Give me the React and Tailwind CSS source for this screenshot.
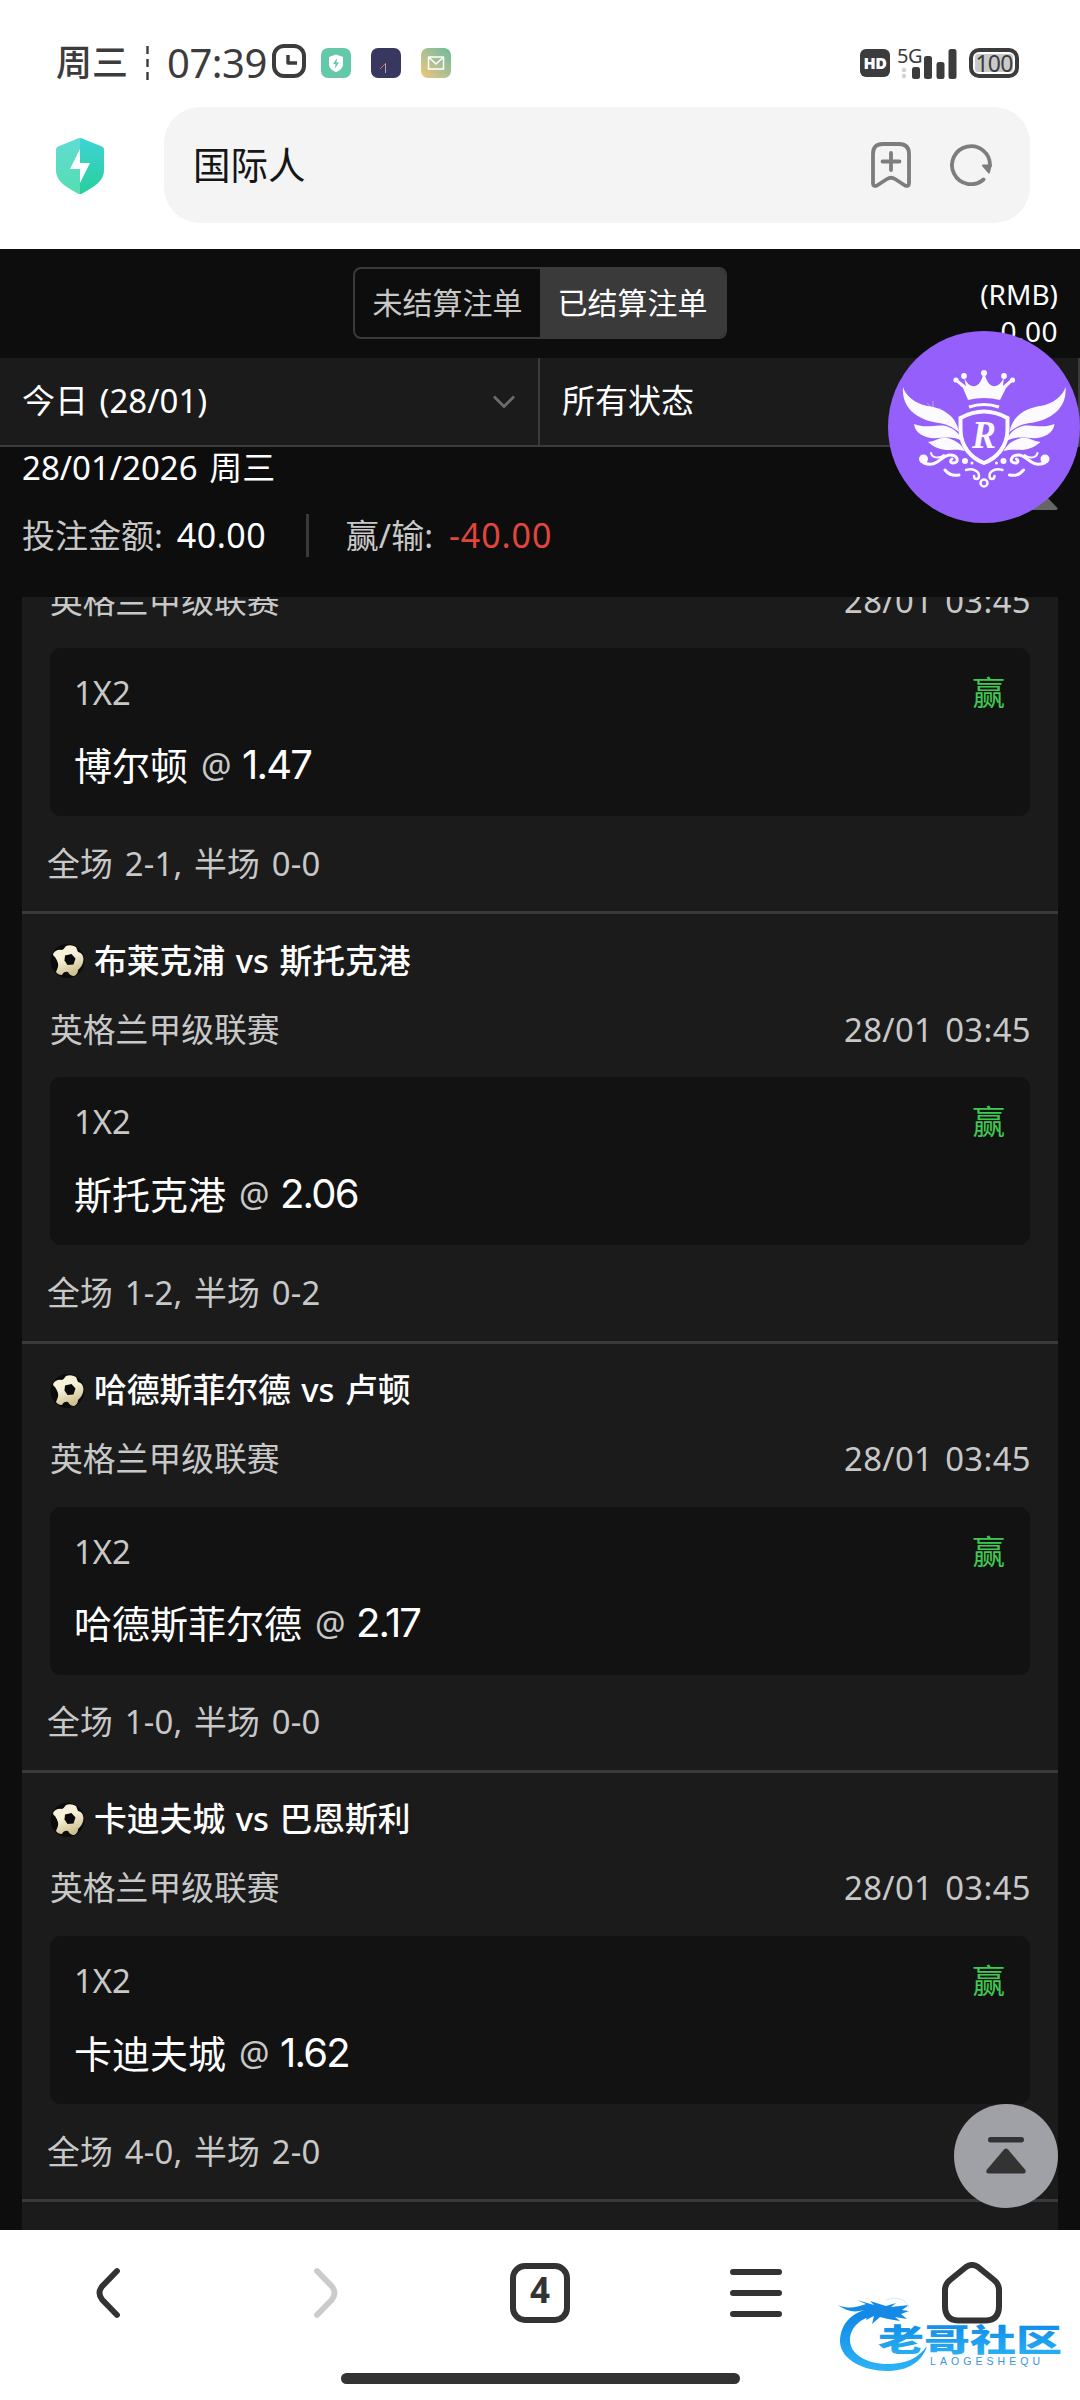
const bets = [
  { id: 1, league: '英格兰甲级联赛', time: '28/01 03:45', pick: '博尔顿', odds: '1.47', result: '全场 2-1, 半场 0-0' },
  { id: 2, match: '布莱克浦 vs 斯托克港', league: '英格兰甲级联赛', time: '28/01 03:45', pick: '斯托克港', odds: '2.06', result: '全场 1-2, 半场 0-2' },
  { id: 3, match: '哈德斯菲尔德 vs 卢顿', league: '英格兰甲级联赛', time: '28/01 03:45', pick: '哈德斯菲尔德', odds: '2.17', result: '全场 1-0, 半场 0-0' },
  { id: 4, match: '卡迪夫城 vs 巴恩斯利', league: '英格兰甲级联赛', time: '28/01 03:45', pick: '卡迪夫城', odds: '1.62', result: '全场 4-0, 半场 2-0' },
];

function StatusBar() {
  return (
    <div className="flex h-[107px] shrink-0 items-center justify-between pt-[19px] pl-[56px] pr-[61px] text-[#3c3c3c]">
      <div className="flex items-center">
        <span className="text-[36px] font-medium leading-none">周三</span>
        <svg className="ml-[18px]" width="3" height="34" viewBox="0 0 3 34" stroke="#3c3c3c" strokeWidth="2.4">
          <path d="M1.5 0v8M1.5 13v8M1.5 26v8" />
        </svg>
        <span className="ml-[18px] w-[105px] text-[40px] leading-none tracking-[-0.5px]">07:39</span>
        <svg className="-mt-1" width="34" height="34" viewBox="0 0 34 34" fill="none" stroke="#3c3c3c" strokeWidth="4">
          <rect x="2" y="2" width="30" height="30" rx="10" />
          <path d="M16 11v8h9" strokeWidth="3.4" strokeLinejoin="round" />
        </svg>
        <svg className="ml-[15px]" width="30" height="30" viewBox="0 0 30 30">
          <rect width="30" height="30" rx="7" fill="#63c9a9" />
          <path d="M15 6.5 22 9v7c0 4-3 6.500-7 8-4-1.500-7-4-7-8V9z" fill="#fff" />
          <path d="M16 10l-4 6h2.500l-.5 4.500 4-6h-2.600z" fill="#63c9a9" />
        </svg>
        <svg className="ml-[20px]" width="30" height="30" viewBox="0 0 30 30">
          <rect width="30" height="30" rx="7" fill="#38375f" />
          <path d="M9 21l6-6" stroke="#e0685a" strokeWidth="1" />
          <path d="M14.500 16v9" stroke="#a9a6bd" strokeWidth="1" />
        </svg>
        <svg className="ml-[20px]" width="30" height="30" viewBox="0 0 30 30" fill="none">
          <defs>
            <linearGradient id="mail" x1="0" y1="1" x2="1" y2="0">
              <stop offset="0" stopColor="#f2c678" />
              <stop offset=".6" stopColor="#9ebf97" />
              <stop offset="1" stopColor="#6cba9b" />
            </linearGradient>
          </defs>
          <rect width="30" height="30" rx="7" fill="url(#mail)" />
          <path d="M7.500 9h15v12h-15zM8 9.500l7 6.500 7-6.500" stroke="#fff" strokeWidth="1.500" strokeLinejoin="round" />
        </svg>
      </div>
      <div className="flex items-center">
        <span className="flex h-[28px] w-[30px] items-center justify-center rounded-[6px] bg-[#3c3c3c] text-[16px] font-black leading-none tracking-[-0.5px] text-white">HD</span>
        <div className="relative ml-[7px] h-[32px] w-[61px]">
          <span className="absolute -top-[1px] left-0 text-[20px] leading-none tracking-[-0.5px]">5G</span>
          <svg width="61" height="32" viewBox="0 0 61 32" fill="#3c3c3c">
            <circle cx="7" cy="23" r="2.200" fill="#d2d2d2" />
            <circle cx="7" cy="29" r="2.200" fill="#d2d2d2" />
            <rect x="15" y="20" width="8" height="12" rx="2.500" />
            <rect x="27" y="9" width="8" height="23" rx="2.500" />
            <rect x="39.500" y="15" width="8" height="17" rx="2.500" />
            <rect x="51.500" y="2" width="8" height="30" rx="2.500" />
          </svg>
        </div>
        <div className="ml-[11px] flex h-[30px] w-[50px] items-center justify-center rounded-[10px] border-4 border-[#3c3c3c] bg-white p-[2px]">
          <span className="flex h-full w-full items-center justify-center rounded-[3px] bg-[#c9c9c9] text-[23px] leading-none tracking-[-0.8px]">100</span>
        </div>
      </div>
    </div>
  );
}

function AddressBar() {
  return (
    <div className="flex h-[142px] shrink-0 items-start pl-[56px] pr-[50px]">
      <svg className="mt-[31px]" width="48" height="56" viewBox="0 0 48 56">
        <defs>
          <linearGradient id="shieldLeft" x1="0" y1="0" x2="0" y2="1">
            <stop offset="0" stopColor="#60dcd4" />
            <stop offset="1" stopColor="#55deb0" />
          </linearGradient>
          <linearGradient id="shieldRight" x1="0" y1="0" x2="0" y2="1">
            <stop offset="0" stopColor="#3fd3d3" />
            <stop offset="1" stopColor="#27cf9d" />
          </linearGradient>
        </defs>
        <path d="M24 0Q22 0 20 1.200L2 8.500Q0 9.500 0 11.500V32C0 44 11 49 20 54.500Q22 56 24 56Z" fill="url(#shieldLeft)" />
        <path d="M24 0Q26 0 28 1.200L46 8.500Q48 9.500 48 11.500V32C48 44 37 49 28 54.500Q26 56 24 56Z" fill="url(#shieldRight)" />
        <path d="M24 11 14 31h10v14l10-20H24z" fill="#fff" />
      </svg>
      <div className="ml-[60px] flex h-[116px] flex-1 items-center rounded-[36px] bg-[#f4f4f4] pl-[29px] pr-[38px]">
        <span className="flex-1 text-[37.5px] leading-none text-[#161616]">国际人</span>
        <svg width="40" height="46" viewBox="0 0 40 46" fill="none" stroke="#7d7d7d" strokeWidth="3.800" strokeLinecap="round" strokeLinejoin="round">
          <path d="M2 12Q2 2 12 2H28Q38 2 38 12V41Q38 45 34 43.500L24 37Q20 34.500 16 37L6 43.500Q2 45 2 41Z" />
          <path d="M20 11v17M11.500 19.500h17" />
        </svg>
        <svg className="ml-[39px]" width="42" height="42" viewBox="0 0 42 42" fill="none" stroke="#7d7d7d" strokeWidth="3.800" strokeLinecap="round">
          <path d="M33.500 35.500A19 19 0 1 1 40 22" />
          <path d="M33 21.500h7.500L39 28.500z" fill="#7d7d7d" strokeWidth="2" strokeLinejoin="round" />
        </svg>
      </div>
    </div>
  );
}

function Football() {
  return (
    <svg width="35" height="36" viewBox="0 0 35 36">
      <defs>
        <linearGradient id="ball" x1="0" y1="0" x2=".4" y2="1">
          <stop offset=".5" stopColor="#f7f1da" />
          <stop offset="1" stopColor="#cfc190" />
        </linearGradient>
      </defs>
      <circle cx="17.500" cy="18" r="17" fill="#0b0b0b" />
      <path
        d="M16 3Q21 1 26 4L28 9Q33 10 33.500 16Q33 22 30 25L28 27Q28 31 24 33Q20 33 18 29Q14 28 12 32Q8 32 6 29L8 24Q9 20 5 14Q3 13 3 11Q6 6 12 7Q14 6 16 3Z"
        fill="url(#ball)"
      />
      <path d="M15 12.500l6.500-1.500 4 4.500-2 6-6 .5-3-4.500z" fill="#0b0b0b" />
    </svg>
  );
}

function BetItem({ bet }) {
  return (
    <div className="border-b-[3px] border-[#3a3a3a] text-[32.8px] leading-none text-[#c8c8c8]">
      {bet.match && (
        <div className="flex h-[93px] items-center gap-[9px] pt-px pl-[28px] font-medium text-white">
          <Football />
          <span className="[word-spacing:2px]">{bet.match}</span>
        </div>
      )}
      <div className="flex h-[44px] items-center justify-between pt-[2px] pl-[28px] pr-[27px]">
        <span>{bet.league}</span>
        <span className="tracking-[0.4px] [word-spacing:3px]">{bet.time}</span>
      </div>
      <div className="mx-[28px] mt-[26px] h-[168px] rounded-[11px] bg-[#121212] pt-[29px] pr-[25px] pl-[24px]">
        <div className="flex items-center justify-between">
          <span>1X2</span>
          <span className="text-[#3fc950]">赢</span>
        </div>
        <div className="mt-[33px] flex items-center text-[38px] leading-[44px] text-white">
          <span>{bet.pick}</span>
          <span className="ml-[13px] w-[33px] text-[34px] text-[#c8c8c8]">@</span>
          <span className="ml-[8px] font-['Inter'] text-[40px] tracking-[-1.8px]">{bet.odds}</span>
        </div>
      </div>
      <div className="flex h-[95.3px] items-center pt-px pl-[25px] tracking-[0.2px] [word-spacing:3px]">{bet.result}</div>
    </div>
  );
}

// One half of the crest, mirrored for the other side
function CrestHalf() {
  return (
    <>
      <path d="M15 56C17 64 27 73 40 75C54 77 68 84 71 101C63 95 58 93 51 92C34 90 13 80 15 56Z" />
      <path d="M26 93C38 98 48 93 58 95C67 98 71 102 74 110C65 105 60 107 50 107C38 108 27 103 26 93Z" />
      <path d="M40 111C49 110 51 106 59 107C68 109 73 113 77 120C69 118 66 119 58 119C50 118 46 116 40 111Z" />
      <g fill="none" stroke="#fbfaff" strokeWidth="3" strokeLinecap="round">
        <path d="M36 132C50 137 53 124 62 124C70 124 72 132 65 132C62 132 62 129 64 128" />
        <path d="M43 122C44 127 51 128 56 124" strokeWidth="2" />
        <path d="M57 139C61 144 66 145 71 144" />
        <path d="M78 139C85 137 91 140 91 145C91 149 86 149 86 145" strokeWidth="2.500" />
      </g>
      <circle cx="35.500" cy="128" r="4.500" />
      <circle cx="77" cy="130" r="3" />
      <circle cx="84" cy="132" r="1.500" />
    </>
  );
}

function CrestBadge() {
  return (
    <div className="absolute top-[331px] left-[888px] h-[192px] w-[192px] rounded-full bg-[#955ffb]">
      <svg width="192" height="192" viewBox="0 0 192 192" fill="#fbfaff">
        <path d="M80 69 75 57 67 50 69 48 78 55 76 46C80 57 91 60 95 44H97C101 60 112 57 116 46L115 55 123 48 125 50 118 57 112 69Q96 65 80 69Z" />
        <circle cx="68" cy="49" r="2.600" />
        <circle cx="76" cy="45" r="2.900" />
        <circle cx="96" cy="42" r="3" />
        <circle cx="116" cy="45" r="2.900" />
        <circle cx="124.500" cy="49" r="2.600" />
        <path d="M81 76Q96 71 111 76" fill="none" stroke="#fbfaff" strokeWidth="3" />
        <CrestHalf />
        <g transform="matrix(-1 0 0 1 192.500 0)">
          <CrestHalf />
        </g>
        <path d="M72.500 87Q96 74 119.500 87V99C119 116 109 127 96 132C83 127 73 116 72.500 99Z" fill="#955ffb" stroke="#fbfaff" strokeWidth="4" />
        <circle cx="96" cy="152" r="3.500" fill="none" stroke="#fbfaff" strokeWidth="2.500" />
        <path d="M45 70v15M37 78h16M39 72l12 12" stroke="#fff" strokeWidth=".6" opacity=".7" />
        <text x="84" y="117" className="font-['Liberation_Serif']" fontSize="41" fontWeight="bold" fontStyle="italic" textLength="24" lengthAdjust="spacingAndGlyphs">R</text>
      </svg>
    </div>
  );
}

function Watermark() {
  return (
    <svg className="absolute top-[2296px] left-[838px]" width="226" height="78" viewBox="0 0 226 78">
      <defs>
        <linearGradient id="blue" x1="0" y1="0" x2="0" y2="1">
          <stop offset="0" stopColor="#0b83e4" />
          <stop offset="1" stopColor="#2cb4f6" />
        </linearGradient>
      </defs>
      <path d="M42 11C14 13 2 28 2 46C3 64 26 75 49 75C70 75 84 66 89 50C80 63 66 68 50 68C28 68 12 58 12 44C12 32 22 22 38 19Z" fill="url(#blue)" />
      <path d="M0 9C10 13 17 12 28 8L19 4L36 9L32 5L48 10L58 7L53 11L71 9L64 14L71 15L63 18L69 23L57 21L62 25L50 23L42 21L34 28L36 20L28 24L30 17L18 20L26 14C16 17 8 15 0 9Z" fill="#1489e6" />
      <path d="M48 4C58 0 68 3 71 12" fill="none" stroke="#d3e9fb" strokeWidth="1" />
      <text x="40" y="54.500" className="font-['Noto_Sans_CJK_SC']" fontSize="31" fontWeight="900" textLength="184" lengthAdjust="spacingAndGlyphs" fill="url(#blue)">老哥社区</text>
      <text x="92" y="68.500" className="font-['Liberation_Sans']" fontSize="10.500" textLength="110" fill="#3a94dc">LAOGESHEQU</text>
    </svg>
  );
}

function BottomNav() {
  return (
    <div className="flex h-[170px] shrink-0 flex-col items-center bg-white">
      <div className="grid h-[126px] w-full grid-cols-5 items-center justify-items-center">
        <svg width="26" height="52" viewBox="0 0 26 52" fill="none" stroke="#333" strokeWidth="5.800" strokeLinecap="round">
          <path d="M22 4 7 19.500Q2 26 7 32.500L22 48" />
        </svg>
        <svg className="ml-[3px]" width="26" height="52" viewBox="0 0 26 52" fill="none" stroke="#cbcbcb" strokeWidth="5.800" strokeLinecap="round">
          <path d="M4 4 19 19.500Q24 26 19 32.500L4 48" />
        </svg>
        <span className="flex h-[60px] w-[60px] items-center justify-center rounded-[15px] border-[6px] border-[#333] pb-[7px] text-[35px] font-bold leading-none text-[#333]">4</span>
        <svg width="52" height="50" viewBox="0 0 52 50" stroke="#333" strokeWidth="6" strokeLinecap="round">
          <path d="M3 4h46M3 25h46M3 46h46" />
        </svg>
        <svg width="60" height="62" viewBox="0 0 60 62" fill="none" stroke="#333" strokeWidth="6" strokeLinejoin="round">
          <path d="M24 5Q30 1 36 5L52 18Q57 22 57 28V44Q57 58 44 58.500H16Q3 58 3 44V28Q3 22 8 18Z" />
        </svg>
      </div>
      <div className="mt-[17px] h-[11px] w-[399px] rounded-full bg-[#333]" />
    </div>
  );
}

export default function App() {
  return (
    <div className="relative flex h-[2400px] w-[1080px] flex-col overflow-hidden bg-white font-['Noto_Sans','Noto_Sans_CJK_SC',sans-serif]">
      <StatusBar />
      <AddressBar />

      <main className="flex min-h-0 flex-1 flex-col bg-[#0d0d0d] text-white">
        <div className="grid h-[109px] shrink-0 grid-cols-[1fr_374px_1fr] pt-[18px]">
          <div />
          <div className="flex h-[72px] overflow-hidden rounded-[8px] border-2 border-[#3a3a3a] text-[30px] leading-none">
            <span className="flex flex-1 items-center justify-center text-[#c8c8c8]">未结算注单</span>
            <span className="flex flex-1 items-center justify-center bg-[#3a3a3a]">已结算注单</span>
          </div>
          <div className="pt-[9px] pr-[22px] text-right text-[28px] leading-[37px]">
            <div>(RMB)</div>
            <div className="tracking-[0.5px]">0.00</div>
          </div>
        </div>

        <div className="grid h-[89px] shrink-0 grid-cols-2 border-b-2 border-[#3b3b3b] bg-[#1b1b1b] pb-[2px] text-[33px] leading-none">
          <div className="-mb-[2px] flex items-center justify-between border-r-2 border-[#3b3b3b] pl-[22px] pr-[23px] pb-[2px]">
            <span className="[word-spacing:3px]">今日 (28/01)</span>
            <svg className="mt-[2px]" width="22" height="14" viewBox="0 0 22 14" fill="none" stroke="#6b6b6b" strokeWidth="2.800">
              <path d="M1 1.500 11 11.500 21 1.500" />
            </svg>
          </div>
          <div className="-mb-[2px] flex items-center border-r-2 border-[#3b3b3b] pl-[22px] pb-[2px]">所有状态</div>
        </div>

        <div className="flex h-[150px] shrink-0 flex-col px-[22px] text-[33px] leading-none">
          <div className="flex h-[42px] items-center pb-px [word-spacing:3px]">28/01/2026 周三</div>
          <div className="mt-[24px] flex h-[44px] items-center">
            <span className="text-[#c8c8c8]">投注金额:</span>
            <span className="ml-[14px] w-[94px] text-[34px] tracking-[0.5px]">40.00</span>
            <span className="ml-[35px] h-[43px] w-[3px] bg-[#3a3a3a]" />
            <span className="ml-[37px] text-[#c8c8c8]">赢/输:</span>
            <span className="ml-[16px] text-[34px] tracking-[0.9px] text-[#e2453c]">-40.00</span>
          </div>
        </div>

        <div className="mx-[22px] min-h-0 flex-1 overflow-hidden bg-[#1b1b1b]">
          <div className="-mt-[19px]">
            {bets.map((bet) => (
              <BetItem key={bet.id} bet={bet} />
            ))}
          </div>
        </div>
      </main>

      <BottomNav />

      {/* Floating widgets */}
      <svg className="absolute top-[488px] left-[1016px]" width="42" height="22" viewBox="0 0 42 22" fill="#666">
        <path d="M20 1Q22 0 24 2L41.500 20Q42 22 40 22H2Q0 22 1 20Z" />
      </svg>
      <CrestBadge />
      <button className="absolute top-[2104px] left-[954px] flex h-[104px] w-[104px] items-center justify-center rounded-full bg-[#9fa1a7]">
        <svg width="42" height="38" viewBox="0 0 42 38" fill="#333">
          <rect x="3" y="0" width="36" height="5.500" rx="2.700" />
          <path d="M19 12.500Q21 10.500 23 12.500L40 32.500Q42 36 38.500 36.500H3.500Q0 36 2 32.500Z" />
        </svg>
      </button>
      <Watermark />
    </div>
  );
}
